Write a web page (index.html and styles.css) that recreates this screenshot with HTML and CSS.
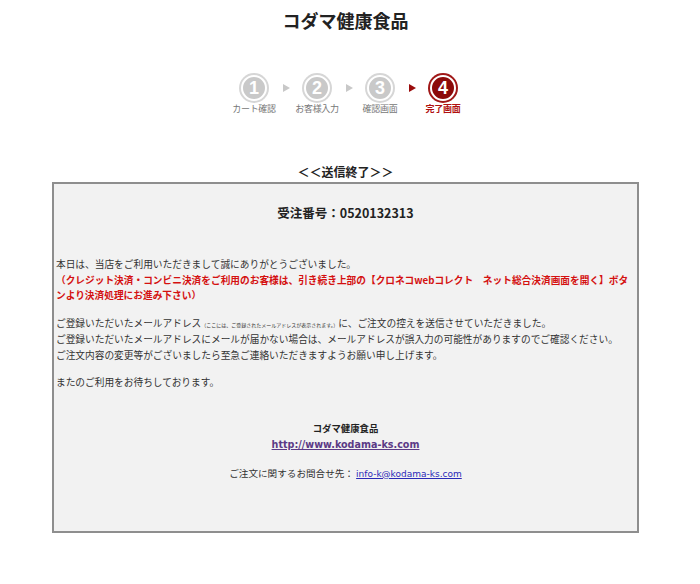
FILE: index.html
```html
<!DOCTYPE html>
<html lang="ja">
<head>
	<meta charset="utf-8">
	<title>コダマ健康食品 送信終了</title>
	<link rel="stylesheet" href="styles.css">
</head>
<body>
<div class="wrap">
	<h1 class="shop_name">コダマ健康食品</h1>

	<ul class="steps">
		<li class="step">
			<span class="num">1</span>
			<span class="label">カート確認</span>
		</li>
		<li class="arrow"></li>
		<li class="step">
			<span class="num">2</span>
			<span class="label">お客様入力</span>
		</li>
		<li class="arrow"></li>
		<li class="step">
			<span class="num">3</span>
			<span class="label">確認画面</span>
		</li>
		<li class="arrow on"></li>
		<li class="step on">
			<span class="num">4</span>
			<span class="label">完了画面</span>
		</li>
	</ul>

	<p class="result_title">＜＜送信終了＞＞</p>

	<div class="result_box">
		<p class="order_no">受注番号：0520132313</p>

		<div class="message">
			<p>本日は、当店をご利用いただきまして誠にありがとうございました。<br>
			<strong class="notice">（クレジット決済・コンビニ決済をご利用のお客様は、引き続き上部の【クロネコwebコレクト　ネット総合決済画面を開く】ボタンより決済処理にお進み下さい）</strong></p>

			<p>ご登録いただいたメールアドレス<small>（ここには、ご登録されたメールアドレスが表示されます。）</small>に、ご注文の控えを送信させていただきました。<br>
			ご登録いただいたメールアドレスにメールが届かない場合は、メールアドレスが誤入力の可能性がありますのでご確認ください。<br>
			ご注文内容の変更等がございましたら至急ご連絡いただきますようお願い申し上げます。</p>

			<p>またのご利用をお待ちしております。</p>
		</div>

		<div class="shop_info">
			<p class="shop_sign">コダマ健康食品</p>
			<p><a class="url" href="#">http://www.kodama-ks.com</a></p>
			<p class="contact">ご注文に関するお問合せ先： <a href="#">info-k@kodama-ks.com</a></p>
		</div>
	</div>
</div>
</body>
</html>
```

FILE: styles.css
```css
*	{margin:0;padding:0;}
body	{font-family:"Noto Sans CJK JP", "Liberation Sans", sans-serif;font-size:10px;line-height:1.5;color:#333;background-color:#fff;}
ul	{list-style:none;}
.wrap	{width:587px;margin-left:52px;}
.shop_name	{padding-top:8px;text-align:center;font-size:18px;line-height:24px;font-weight:bold;color:#222;}

/* steps */
.steps	{display:flex;justify-content:center;align-items:flex-start;margin-top:43px;padding-left:6px;}
.steps .step	{display:flex;flex-direction:column;align-items:center;width:46px;}
.steps .num	{display:flex;justify-content:center;align-items:center;width:22px;height:22px;border-radius:50%;background-color:#c9c9c9;border:2px solid #fff;box-shadow:0 0 0 2px #d6d6d6;font-family:"Liberation Sans", Arial, sans-serif;font-size:18px;font-weight:bold;color:#fff;}
.steps .label	{margin-top:2px;font-size:9px;line-height:12px;color:#777;white-space:nowrap;letter-spacing:-0.3px;}
.steps .step.on .num	{background-color:#8c0a0a;box-shadow:0 0 0 2px #a01818;}
.steps .step.on .label	{color:#b01010;font-weight:bold;}
.steps .arrow	{width:0;height:0;margin:9px 4px 0 6px;border-left:7px solid #c8c8c8;border-top:4px solid transparent;border-bottom:4px solid transparent;}
.steps .arrow.on	{border-left-color:#9a0c0c;}

/* result */
.result_title	{margin-top:48px;text-align:center;font-size:12px;line-height:18px;font-weight:bold;color:#222;}
.result_box	{margin-top:1px;height:347px;border:2px solid #8e8e8e;background-color:#f2f2f2;}
.order_no	{margin-top:19px;text-align:center;font-size:12.5px;line-height:20px;font-weight:bold;color:#222;}
.message	{margin-top:34px;padding:0 2px;font-size:9.7px;line-height:15.5px;}
.message p + p	{margin-top:12px;}
.message .notice	{color:#d41010;font-weight:bold;}
.message small	{font-size:5px;}
.shop_info	{margin-top:30px;text-align:center;}
.shop_sign	{font-size:9.4px;line-height:15px;font-weight:bold;color:#222;}
.shop_info .url	{font-family:"DejaVu Sans", Verdana, sans-serif;font-size:9.6px;line-height:15px;font-weight:bold;color:#5b3a86;}
.shop_info .contact	{margin-top:14px;font-size:9.6px;line-height:15px;}
.shop_info .contact a	{font-family:"DejaVu Sans", Verdana, sans-serif;font-size:9px;color:#2a2ab8;}
```
